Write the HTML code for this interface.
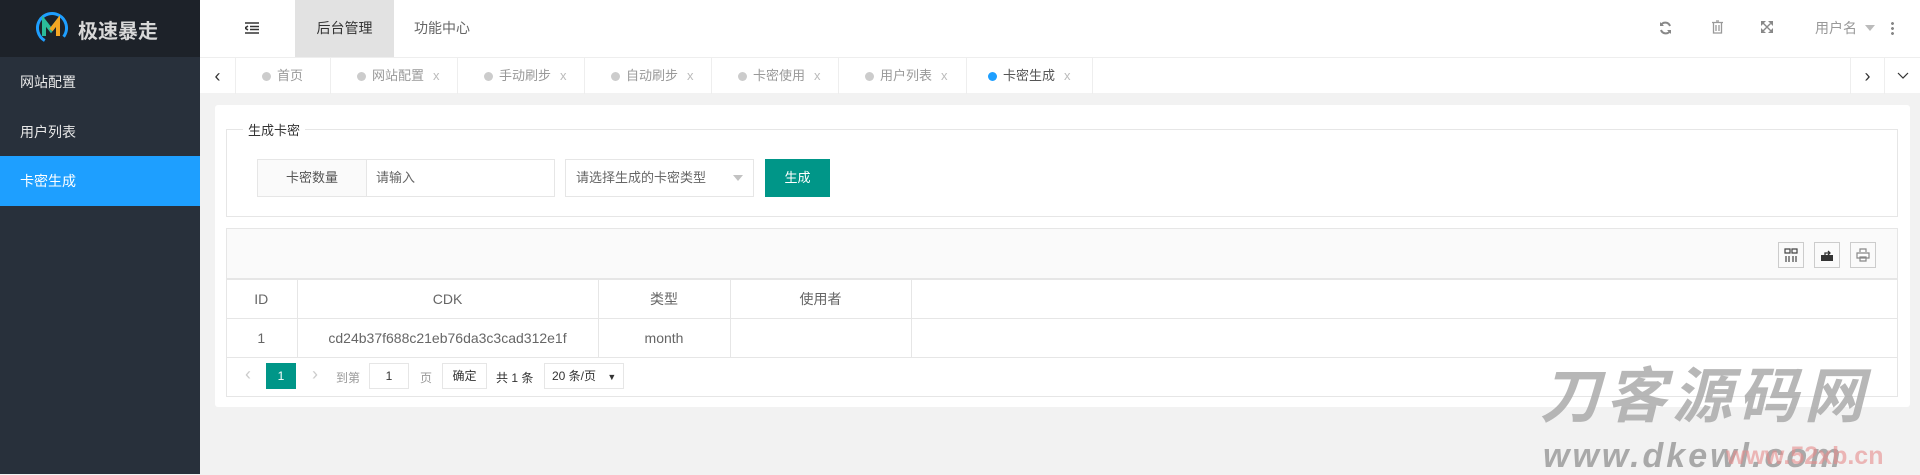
<!DOCTYPE html>
<html><head><meta charset="utf-8"><style>
*{margin:0;padding:0;box-sizing:border-box}
body{width:1920px;height:474px;overflow:hidden;background:#f2f2f2;font-family:"Liberation Sans","Noto Sans CJK SC",sans-serif;font-size:14px;color:#666;position:relative}
.a{position:absolute}
.side{left:0;top:0;width:200px;height:474px;background:#28303b}
.logo{left:0;top:0;width:200px;height:57px;background:#1d2229;color:#fff;font-size:20px;font-weight:bold}
.mi{left:0;width:200px;height:50px;line-height:50px;padding-left:20px;color:#e8e8e8;font-size:14px}
.hdr{left:200px;top:0;width:1720px;height:57px;background:#fff}
.tabs{left:200px;top:57px;width:1720px;height:36px;background:#fff;border-top:1px solid #eee}
.tb{top:0;height:36px;border-right:1px solid #eee;line-height:36px;font-size:13px;color:#999}
.dot{display:inline-block;width:9px;height:9px;border-radius:50%;background:#ccc;margin-right:6px;vertical-align:-1px}
.x{color:#bbb;margin-left:9px;font-size:13px}
.card{left:215px;top:105px;width:1695px;height:302px;background:#fff;border-radius:3px}
.ln{border:1px solid #e6e6e6}
td{border:1px solid #e6e6e6}
</style></head><body>
<div class="a side"></div>
<div class="a logo">
<svg class="a" style="left:35px;top:11px" width="34" height="34" viewBox="0 0 34 34"><circle cx="17" cy="17" r="14.5" fill="none" stroke="#1e9fff" stroke-width="3" stroke-dasharray="70 21" transform="rotate(120 17 17)"/><path d="M9 25V10l7 9 7-9v15" fill="none" stroke="#2bbb9a" stroke-width="4"/><path d="M16 19l7-9v15" fill="none" stroke="#f5a623" stroke-width="4"/></svg>
<span class="a" style="left:78px;top:15px;color:#d8d8d8">极速暴走</span></div>
<div class="a mi" style="top:57px">网站配置</div>
<div class="a mi" style="top:107px">用户列表</div>
<div class="a mi" style="top:156px;background:#1e9fff;color:#fff">卡密生成</div>

<div class="a hdr">
<svg class="a" style="left:45px;top:22px" width="14" height="12" viewBox="0 0 14 12"><path d="M0 1h14M5 4.5h9M5 7.5h9M0 11h14M3 4L0 6l3 2" stroke="#333" stroke-width="1.6" fill="none"/></svg>
<div class="a" style="left:95px;top:0;width:99px;height:57px;background:#e2e2e2;line-height:57px;text-align:center;color:#333">后台管理</div>
<div class="a" style="left:214px;top:0;line-height:57px;color:#666">功能中心</div>
<svg class="a" style="left:1459px;top:21px" width="13" height="14" viewBox="0 0 13 14"><path d="M11 5A5 5 0 0 0 2 4M2 9a5 5 0 0 0 9 1" stroke="#888" stroke-width="2" fill="none"/><path d="M1 1v4h4M12 13V9H8" fill="#888"/></svg>
<svg class="a" style="left:1512px;top:20px" width="11" height="14" viewBox="0 0 11 14"><path d="M0 2.5h11M4 1h3M1.5 3v10h8V3M4 5v6M7 5v6" stroke="#999" stroke-width="1.3" fill="none"/></svg>
<svg class="a" style="left:1561px;top:21px" width="12" height="12" viewBox="0 0 12 12"><path d="M0 0h4L0 4zM12 0H8l4 4zM0 12h4L0 8zM12 12H8l4-4zM2 2l8 8M10 2l-8 8" stroke="#888" stroke-width="1.4" fill="#888"/></svg>
<div class="a" style="left:1615px;top:0;line-height:57px;color:#999">用户名</div>
<div class="a" style="left:1665px;top:25px;border:5px solid transparent;border-top:6px solid #bbb"></div>
<div class="a" style="left:1691px;top:21px;width:3px;height:14px;background:radial-gradient(circle,#888 1.3px,transparent 1.6px) 0 0/3px 5px"></div>
</div>

<div class="a tabs">
<div class="a tb" style="left:0;width:36px;text-align:center;font-size:18px;color:#333">&#x2039;</div>
<div class="a tb" style="left:36px;width:95px;padding-left:26px"><span class="dot"></span>首页</div>
<div class="a tb" style="left:131px;width:127px;padding-left:26px"><span class="dot"></span>网站配置<span class="x">x</span></div>
<div class="a tb" style="left:258px;width:127px;padding-left:26px"><span class="dot"></span>手动刷步<span class="x">x</span></div>
<div class="a tb" style="left:385px;width:127px;padding-left:26px"><span class="dot"></span>自动刷步<span class="x">x</span></div>
<div class="a tb" style="left:512px;width:127px;padding-left:26px"><span class="dot"></span>卡密使用<span class="x">x</span></div>
<div class="a tb" style="left:639px;width:128px;padding-left:26px"><span class="dot"></span>用户列表<span class="x">x</span></div>
<div class="a tb" style="left:767px;width:126px;padding-left:21px;color:#555"><span class="dot" style="background:#1e9fff"></span>卡密生成<span class="x">x</span></div>
<div class="a tb" style="left:1650px;width:35px;border-left:1px solid #eee;text-align:center;font-size:18px;color:#333">&#x203A;</div>
<div class="a tb" style="left:1685px;width:35px;border:none;text-align:center;color:#333">
<svg width="12" height="8" viewBox="0 0 12 8"><path d="M1 1l5 5 5-5" stroke="#333" fill="none" stroke-width="1.2"/></svg></div>
</div>

<div class="a card"></div>
<div class="a ln" style="left:226px;top:129px;width:1672px;height:88px"></div>
<div class="a" style="left:243px;top:120px;background:#fff;padding:0 5px;color:#333;font-size:13px">生成卡密</div>
<div class="a ln" style="left:257px;top:159px;width:110px;height:38px;background:#fafafa;line-height:36px;text-align:center;color:#555;font-size:13px">卡密数量</div>
<div class="a ln" style="left:366px;top:159px;width:189px;height:38px;line-height:36px;padding-left:10px;color:#666;font-size:13px;border-left:none">请输入</div>
<div class="a ln" style="left:565px;top:159px;width:189px;height:38px;line-height:36px;padding-left:10px;color:#666;font-size:13px">请选择生成的卡密类型</div>
<div class="a" style="left:733px;top:175px;border:5px solid transparent;border-top:6px solid #c2c2c2"></div>
<div class="a" style="left:765px;top:159px;width:65px;height:38px;background:#009688;color:#fff;line-height:38px;text-align:center;font-size:13px">生成</div>

<div class="a ln" style="left:226px;top:228px;width:1672px;height:169px"></div>
<div class="a" style="left:227px;top:229px;width:1670px;height:50px;background:#fafafa;border-bottom:1px solid #e6e6e6"></div>
<div class="a ln" style="left:1778px;top:242px;width:26px;height:26px;border-color:#ccc"><svg style="margin:5px" width="14" height="14" viewBox="0 0 14 14"><path d="M1 1h5v4H1zM8 1h5v4H8zM2 8v6M5 8v6M9 8v6M12 8v6" stroke="#444" fill="none" stroke-width="1.2"/></svg></div>
<div class="a ln" style="left:1814px;top:242px;width:26px;height:26px;border-color:#ccc"><svg style="margin:5px" width="14" height="14" viewBox="0 0 14 14"><path d="M1 7h12v6H1z" fill="#333"/><path d="M5 7V5h5M8 3l2 2-2 2" stroke="#333" fill="none" stroke-width="1.3"/></svg></div>
<div class="a ln" style="left:1850px;top:242px;width:26px;height:26px;border-color:#ccc"><svg style="margin:5px" width="14" height="14" viewBox="0 0 14 14"><path d="M4 4V1h6v3M1 5h12v5H1zM4 9h6v4H4z" stroke="#888" fill="#fff" stroke-width="1.2"/></svg></div>

<table class="a" style="left:226px;top:279px;border-collapse:collapse;font-size:14px;color:#666;text-align:center">
<tr style="height:39px"><td style="width:71px;border-left:none">ID</td><td style="width:301px">CDK</td><td style="width:132px">类型</td><td style="width:181px">使用者</td><td style="width:987px;border-right:none"></td></tr>
<tr style="height:39px"><td style="border-left:none">1</td><td>cd24b37f688c21eb76da3c3cad312e1f</td><td>month</td><td></td><td style="border-right:none"></td></tr>
</table>
<div class="a" style="left:245px;top:364px;font-size:18px;color:#ccc">&#x2039;</div>
<div class="a" style="left:266px;top:363px;width:30px;height:26px;background:#009688;color:#fff;text-align:center;line-height:26px;font-size:12px">1</div>
<div class="a" style="left:312px;top:364px;font-size:18px;color:#ccc">&#x203A;</div>
<div class="a" style="left:336px;top:369px;font-size:12px;color:#999">到第</div>
<div class="a ln" style="left:369px;top:363px;width:40px;height:26px;text-align:center;line-height:24px;font-size:12px;color:#333">1</div>
<div class="a" style="left:420px;top:369px;font-size:12px;color:#999">页</div>
<div class="a ln" style="left:442px;top:363px;width:45px;height:26px;text-align:center;line-height:24px;font-size:12px;color:#333">确定</div>
<div class="a" style="left:496px;top:369px;font-size:12px;color:#333">共 1 条</div>
<div class="a ln" style="left:544px;top:363px;width:80px;height:26px;line-height:24px;padding-left:7px;font-size:12px;color:#333">20 条/页 <span style="font-size:9px;margin-left:8px">▼</span></div>

<div class="a" style="left:1540px;top:362px;font-size:60px;font-weight:bold;font-style:italic;color:rgba(165,165,165,.8);letter-spacing:6px;line-height:70px">刀客源码网</div>
<div class="a" style="left:1543px;top:438px;font-size:34px;font-weight:bold;font-style:italic;color:rgba(150,150,150,.8);letter-spacing:3px;line-height:36px">www.dkewl.com</div>
<div class="a" style="left:1726px;top:441px;font-size:25px;font-weight:bold;color:rgba(230,140,140,.6);line-height:30px">www.52xb.cn</div>
</body></html>
